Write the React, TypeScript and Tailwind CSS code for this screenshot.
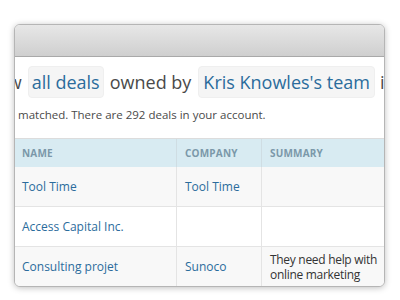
export default function App() {
  const rows = [
    { name: 'Tool Time', company: 'Tool Time', summary: '' },
    { name: 'Access Capital Inc.', company: '', summary: '' },
    { name: 'Consulting projet', company: 'Sunoco', summary: 'They need help with online marketing' },
  ];

  return (
    <div className="w-[400px] h-[300px] bg-white pt-[24px] pl-[14px] font-['Open_Sans',sans-serif]">
      {/* Window */}
      <div className="w-[371px] h-[263px] rounded-[6px] border border-[#b5b5b5] bg-white shadow-[0_1px_6px_rgba(0,0,0,0.25)] overflow-hidden flex flex-col">
        {/* Title bar */}
        <div className="h-[32px] shrink-0 bg-gradient-to-b from-[#e7e7e7] to-[#cfcfcf] border-b border-[#a9a9a9]" />

        {/* Filter sentence, scrolled so it's cut at both edges */}
        <div className="h-[50px] shrink-0 flex items-center whitespace-nowrap text-[18px] text-[#4a4a4a] -ml-[39px]">
          <span>Show</span>
          <span className="ml-[6px] px-[3px] h-[32px] flex items-center rounded-[4px] bg-[#f5f5f5] border border-[#efefef] text-[#2b6c9c]">all deals</span>
          <span className="ml-[6px]">owned by</span>
          <span className="ml-[7px] px-[4px] h-[32px] flex items-center rounded-[4px] bg-[#f5f5f5] border border-[#efefef] text-[#2b6c9c]">Kris Knowles's team</span>
          <span className="ml-[5px]">in</span>
        </div>
        <div className="h-[31px] shrink-0 pl-[3px] whitespace-nowrap text-[11.5px] text-[#4a4a4a] leading-[16px]">
          matched. There are 292 deals in your account.
        </div>

        {/* Table */}
        <div className="grid grid-cols-[162px_85px_1fr] border-t border-[#dcdcdc]">
          <div className="h-[28px] flex items-center pl-[7px] bg-[#d8ebf2] border-r border-[#cfdde3] text-[10px] font-bold tracking-[0.2px] text-[#7b98a9]">NAME</div>
          <div className="h-[28px] flex items-center pl-[8px] bg-[#d8ebf2] border-r border-[#cfdde3] text-[10px] font-bold tracking-[0.2px] text-[#7b98a9]">COMPANY</div>
          <div className="h-[28px] flex items-center pl-[8px] bg-[#d8ebf2] text-[10px] font-bold tracking-[0.2px] text-[#7b98a9]">SUMMARY</div>
          {rows.map((r, i) => {
            const bg = i % 2 === 0 ? 'bg-[#f8f8f8]' : 'bg-white';
            const top = i === 0 ? 'h-[39px]' : 'h-[40px] border-t border-[#e4e4e4]';
            return (
              <div key={i} className="contents">
                <div className={`flex items-center pl-[7px] border-r border-[#e4e4e4] text-[12px] text-[#2b6c9c] ${bg} ${top}`}>{r.name}</div>
                <div className={`flex items-center pl-[8px] border-r border-[#e4e4e4] text-[12px] text-[#2b6c9c] ${bg} ${top}`}>{r.company}</div>
                <div className={`flex items-center pl-[8px] text-[12px] tracking-[-0.3px] leading-[15px] text-[#333] ${bg} ${top}`}>{r.summary}</div>
              </div>
            );
          })}
        </div>
      </div>
    </div>
  );
}
